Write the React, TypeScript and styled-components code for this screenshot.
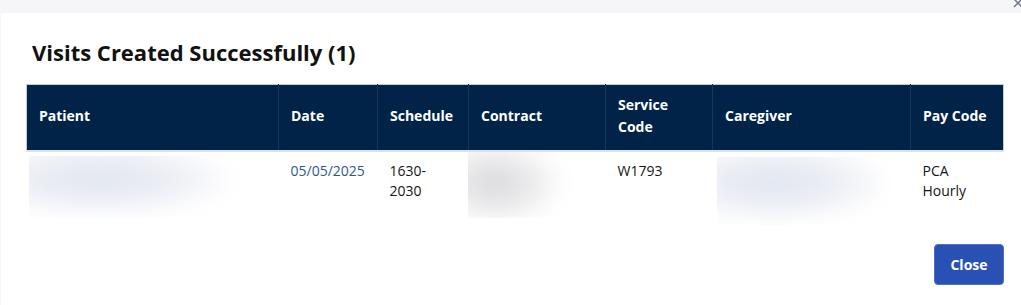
import React from 'react';
import styled, { createGlobalStyle } from 'styled-components';

const GlobalStyle = createGlobalStyle`
  html, body {
    margin: 0;
    padding: 0;
    background: #f6f6f9;
    font-family: "Open Sans", "Noto Sans", Arial, sans-serif;
    overflow: hidden;
  }
`;

const Backdrop = styled.div`
  position: relative;
  width: 1021px;
  height: 305px;
  overflow: hidden;
  background: #f6f6f9;
  padding-top: 13px;
  padding-left: 1px;
  box-sizing: border-box;
`;

const DismissIcon = styled.svg`
  position: absolute;
  top: -3px;
  right: -3px;
  width: 12px;
  height: 12px;
  color: #6b7384;
`;

const Modal = styled.div`
  width: 1040px;
  min-height: 300px;
  background: #ffffff;
  border-radius: 4px 0 0 0;
  padding: 24px 0 0 25px;
  box-sizing: border-box;
`;

const Title = styled.h2`
  margin: 0 0 17px 6px;
  font-size: 22px;
  line-height: 30px;
  font-weight: 700;
  color: #111111;
`;

const Content = styled.div`
  width: 978px;
  display: flex;
  flex-direction: column;
`;

const Table = styled.table`
  width: 978px;
  border-collapse: collapse;
  table-layout: fixed;
`;

const HeadRow = styled.tr`
  background: #012348;
  border: 1px solid #c5ccd8;
  border-bottom: 2px solid #dde1e8;
`;

const HeadCell = styled.th`
  height: 62px;
  padding: 0 12px 3px;
  text-align: left;
  vertical-align: middle;
  font-size: 14px;
  line-height: 22px;
  font-weight: 700;
  color: #ffffff;
  border-left: 1px solid #18365a;
  &:first-child {
    border-left: none;
  }
`;

const Cell = styled.td<{ $link?: boolean }>`
  height: 66px;
  padding: 9px 12px;
  vertical-align: top;
  font-size: 14px;
  line-height: 20px;
  color: ${p => (p.$link ? '#2f5594' : '#151515')};
  box-sizing: border-box;
`;

const BlurCell = styled.td`
  padding: 0;
  vertical-align: top;
  height: 66px;
`;

const Redacted = styled.div<{ $tone: 'blue' | 'grey'; $w: number; $h: number; $ml: number; $mt: number }>`
  position: relative;
  overflow: hidden;
  width: ${p => p.$w}px;
  height: ${p => p.$h}px;
  margin-left: ${p => p.$ml}px;
  margin-top: ${p => p.$mt}px;
  background: ${p => (p.$tone === 'blue' ? '#f4f5f9' : '#f4f4f5')};
  &::before {
    content: '';
    position: absolute;
    inset: -20px;
    background: ${p =>
      p.$tone === 'blue'
        ? 'radial-gradient(ellipse 55% 38% at 36% 42%, #e1e6f1 0%, #e8ebf3 40%, #f4f5f9 75%, #ffffff 100%)'
        : 'radial-gradient(ellipse 42% 42% at 28% 48%, #d9d9db 0%, #e6e6e8 40%, #f4f4f5 75%, #ffffff 100%)'};
    filter: blur(9px);
  }
`;

const Footer = styled.div`
  display: flex;
  justify-content: flex-end;
  margin-top: 19px;
`;

const CloseButton = styled.button`
  width: 70px;
  height: 41px;
  border: 1px solid #4f70c4;
  border-radius: 4px;
  background: #2951b3;
  color: #ffffff;
  font-family: inherit;
  font-size: 14px;
  font-weight: 700;
  cursor: pointer;
`;

const columns = [
  { label: 'Patient', width: 252 },
  { label: 'Date', width: 99 },
  { label: 'Schedule', width: 91 },
  { label: 'Contract', width: 137 },
  { label: 'Service Code', width: 107 },
  { label: 'Caregiver', width: 198 },
  { label: 'Pay Code', width: 93 },
];

export default function App() {
  return (
    <>
      <GlobalStyle />
      <Backdrop>
        <DismissIcon viewBox="0 0 12 12" fill="none" stroke="currentColor" strokeWidth="1.4">
          <path d="M2 2 L10 10 M10 2 L2 10" />
        </DismissIcon>
        <Modal>
          <Title>Visits Created Successfully (1)</Title>
          <Content>
            <Table>
              <colgroup>
                {columns.map(c => (
                  <col key={c.label} style={{ width: c.width }} />
                ))}
              </colgroup>
              <thead>
                <HeadRow>
                  {columns.map(c => (
                    <HeadCell key={c.label}>{c.label}</HeadCell>
                  ))}
                </HeadRow>
              </thead>
              <tbody>
                <tr>
                  <BlurCell>
                    <Redacted $tone="blue" $w={212} $h={62} $ml={2} $mt={4} />
                  </BlurCell>
                  <Cell $link>05/05/2025</Cell>
                  <Cell>
                    1630-
                    <br />
                    2030
                  </Cell>
                  <BlurCell>
                    <Redacted $tone="grey" $w={128} $h={66} $ml={-1} $mt={0} />
                  </BlurCell>
                  <Cell>W1793</Cell>
                  <BlurCell>
                    <Redacted $tone="blue" $w={174} $h={68} $ml={4} $mt={5} />
                  </BlurCell>
                  <Cell>
                    PCA
                    <br />
                    Hourly
                  </Cell>
                </tr>
              </tbody>
            </Table>
            <Footer>
              <CloseButton>Close</CloseButton>
            </Footer>
          </Content>
        </Modal>
      </Backdrop>
    </>
  );
}
